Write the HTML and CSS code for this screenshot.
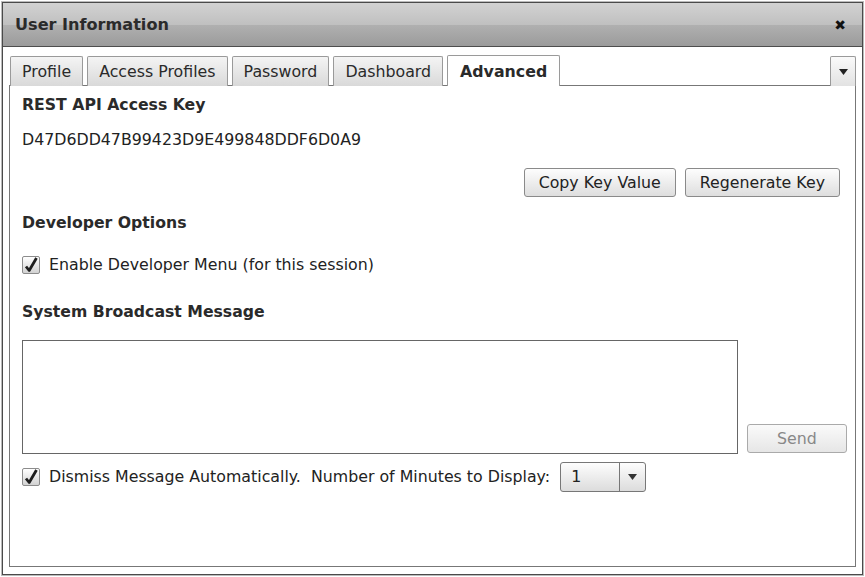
FILE: index.html
```html
<!DOCTYPE html>
<html lang="en">
<head>
  <title>User Information</title>
  <link rel="stylesheet" href="styles.css">
</head>
<body>
  <div class="window">
    <div class="titlebar">
      <span class="title">User Information</span>
      <span class="close">&#x2716;</span>
    </div>

    <div class="window-body">
      <div class="tabs">
        <div class="tab">Profile</div>
        <div class="tab">Access Profiles</div>
        <div class="tab">Password</div>
        <div class="tab">Dashboard</div>
        <div class="tab active">Advanced</div>
        <div class="tab-spacer"></div>
        <div class="tab-menu">
          <svg width="9" height="6" viewBox="0 0 9 6"><path d="M0 0h9L4.5 6z" fill="#222"/></svg>
        </div>
      </div>

      <div class="panel">
        <h2>REST API Access Key</h2>
        <p class="key">D47D6DD47B99423D9E499848DDF6D0A9</p>

        <div class="key-actions">
          <button type="button" class="btn">Copy Key Value</button>
          <button type="button" class="btn">Regenerate Key</button>
        </div>

        <h2 class="dev-title">Developer Options</h2>
        <label class="check-row dev-row">
          <span class="checkbox">
            <svg width="16" height="18" viewBox="0 0 16 18"><path d="M3 10.5l3.2 4L13.5 2" fill="none" stroke="#1e1e1e" stroke-width="2.8" stroke-linejoin="round"/></svg>
          </span>
          Enable Developer Menu (for this session)
        </label>

        <h2 class="broadcast-title">System Broadcast Message</h2>
        <div class="broadcast">
          <textarea class="message"></textarea>
          <button type="button" class="btn send" disabled>Send</button>
        </div>

        <div class="check-row dismiss-row">
          <span class="checkbox">
            <svg width="16" height="18" viewBox="0 0 16 18"><path d="M3 10.5l3.2 4L13.5 2" fill="none" stroke="#1e1e1e" stroke-width="2.8" stroke-linejoin="round"/></svg>
          </span>
          <span>Dismiss Message Automatically.&nbsp; Number of Minutes to Display:</span>
          <div class="select">
            <span class="select-value">1</span>
            <span class="select-arrow">
              <svg width="9" height="6" viewBox="0 0 9 6"><path d="M0 0h9L4.5 6z" fill="#333"/></svg>
            </span>
          </div>
        </div>
      </div>
    </div>
  </div>
</body>
</html>
```

FILE: styles.css
```css
body {
  margin: 0;
  background: #fff;
  font-family: "DejaVu Sans", Verdana, sans-serif;
  font-size: 15.8px;
  color: #222;
}

.window {
  margin: 2px;
  width: 859px;
  height: 571px;
  border: 1px solid #4a4a4a;
  box-shadow: 0 0 0 1px #bbb;
  display: flex;
  flex-direction: column;
}

.titlebar {
  height: 43px;
  border-bottom: 1px solid #4d4d4d;
  background: linear-gradient(#d2d2d2, #c0c0c0 50%, #b0b0b0 51%, #9b9b9b);
  display: flex;
  align-items: center;
  justify-content: space-between;
  padding: 0 16px 0 12px;
}

.title {
  font-weight: bold;
  font-size: 16.1px;
  color: #2b2b2b;
}

.close {
  font-size: 14px;
  font-weight: bold;
  color: #111;
}

.window-body {
  flex: 1;
  padding: 8px 6px 7px 6px;
  display: flex;
  flex-direction: column;
}

.tabs {
  display: flex;
  align-items: flex-end;
  gap: 4px;
  padding-left: 1px;
  height: 30px;
}

.tab {
  height: 29px;
  line-height: 30px;
  padding: 0 11px;
  border: 1px solid #9a9a9a;
  border-bottom: none;
  border-radius: 2px 2px 0 0;
  background: linear-gradient(#f4f4f4, #d9d9d9);
  color: #2a2a2a;
  position: relative;
  top: 1px;
}

.tab.active {
  background: #fff;
  font-weight: bold;
  padding: 0 12px;
  height: 30px;
  line-height: 32px;
  z-index: 1;
}

.tab-spacer {
  flex: 1;
}

.tab-menu {
  width: 24px;
  height: 29px;
  border: 1px solid #9a9a9a;
  border-bottom: none;
  border-radius: 2px 2px 0 0;
  background: linear-gradient(#fafafa, #e2e2e2);
  display: flex;
  align-items: center;
  justify-content: center;
  position: relative;
  top: 1px;
}

.panel {
  flex: 1;
  border: 1px solid #777;
  padding: 10px 7px 0 12px;
}

h2 {
  margin: 0;
  font-size: 15.7px;
  line-height: 18px;
  color: #2a2a2a;
}

.key {
  margin: 17px 0 0;
  line-height: 18px;
}

.key-actions {
  margin-top: 19px;
  margin-right: 8px;
  display: flex;
  justify-content: flex-end;
  gap: 9px;
}

.btn {
  font-family: inherit;
  font-size: 15.8px;
  color: #222;
  height: 29px;
  padding: 0 14px;
  border: 1px solid #8a8a8a;
  border-radius: 3px;
  background: linear-gradient(#fdfdfd, #dedede);
}

.dev-title {
  margin-top: 17px;
}

.check-row {
  display: flex;
  align-items: center;
  gap: 9px;
  line-height: 18px;
}

.dev-row {
  margin-top: 24px;
}

.checkbox {
  width: 16px;
  height: 16px;
  border: 1px solid #8c8c8c;
  border-radius: 2px;
  background: linear-gradient(#fff, #d2d2d2);
  display: flex;
  align-items: flex-end;
  justify-content: center;
  overflow: visible;
}

.checkbox svg {
  flex-shrink: 0;
  margin-bottom: -1px;
}

.broadcast-title {
  margin-top: 29px;
}

.broadcast {
  margin-top: 19px;
  display: flex;
  align-items: flex-end;
  gap: 9px;
}

.message {
  flex-shrink: 0;
  width: 716px;
  height: 114px;
  box-sizing: border-box;
  border: 1px solid #666;
  resize: none;
  margin: 0;
}

.btn.send {
  flex-shrink: 0;
  width: 100px;
  color: #888;
  border-color: #aaa;
  background: linear-gradient(#fafafa, #e6e6e6);
  margin-bottom: 1px;
}

.dismiss-row {
  margin-top: 8px;
}

.select {
  margin-left: 1px;
  width: 84px;
  height: 28px;
  border: 1px solid #777;
  border-radius: 3px;
  background: linear-gradient(#fdfdfd, #dcdcdc);
  display: flex;
}

.select-value {
  flex: 1;
  padding-left: 10px;
  line-height: 28px;
}

.select-arrow {
  width: 25px;
  border-left: 1px solid #777;
  display: flex;
  align-items: center;
  justify-content: center;
}
```
